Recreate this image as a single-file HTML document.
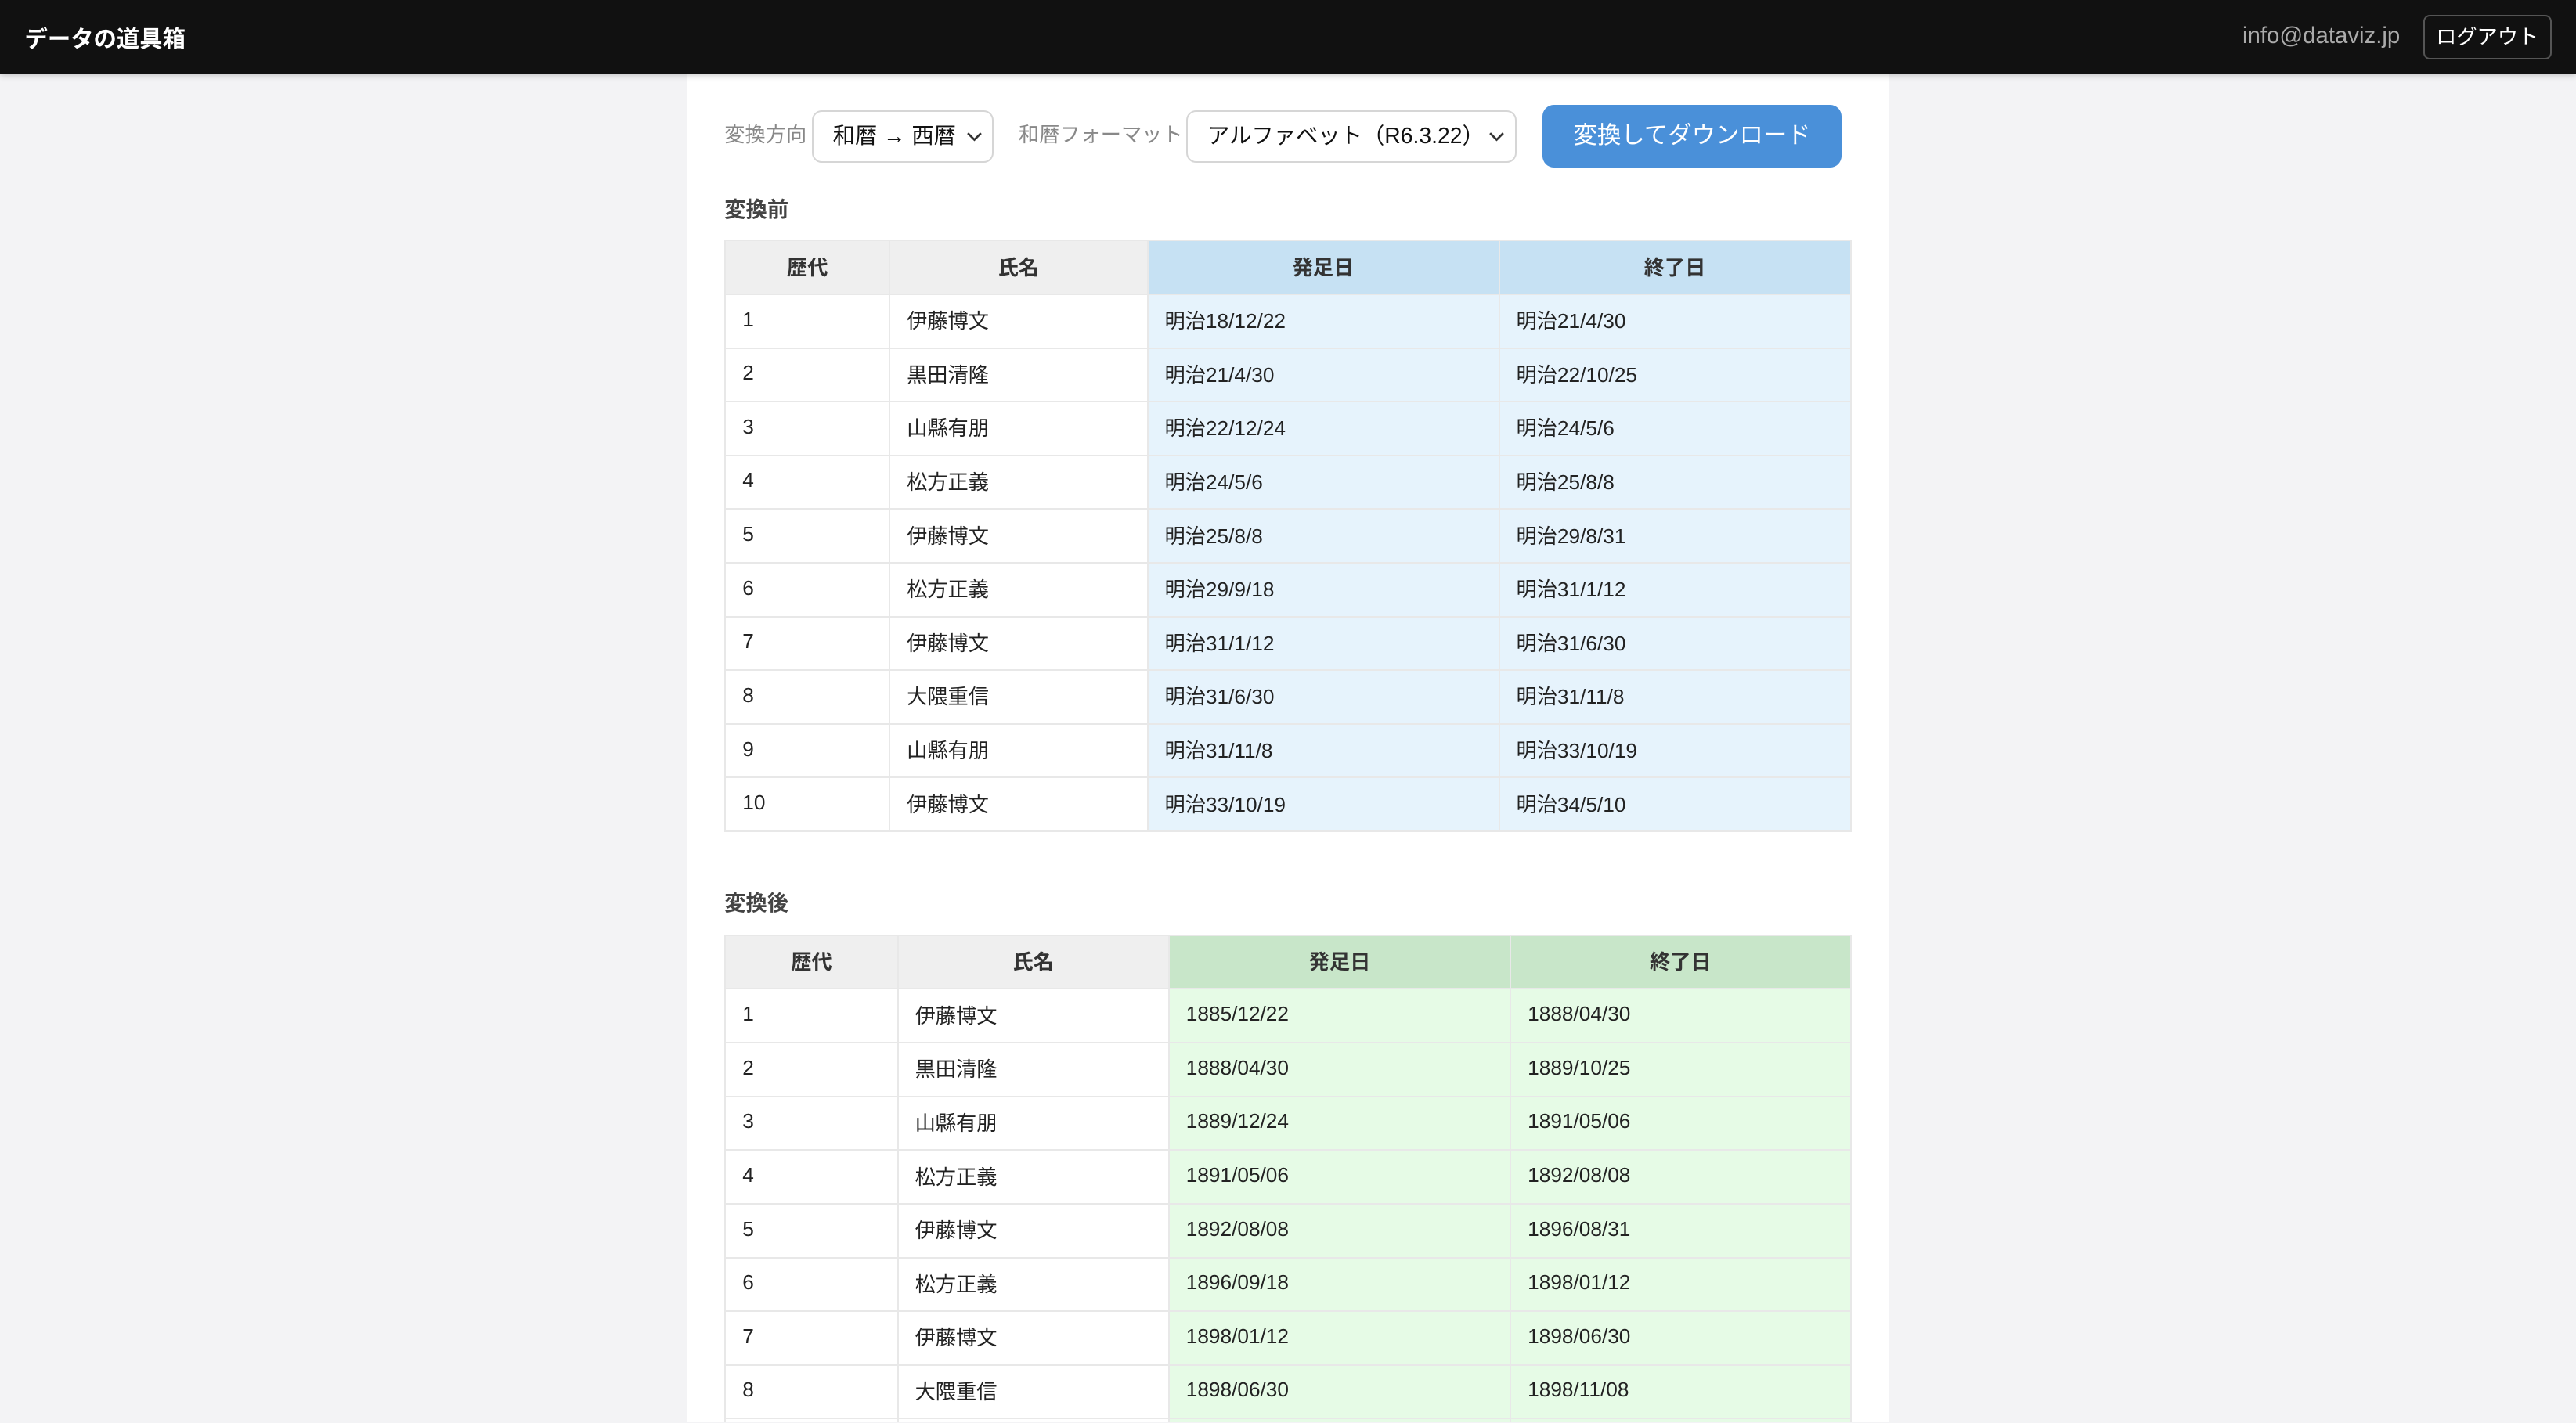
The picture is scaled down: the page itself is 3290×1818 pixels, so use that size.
<!DOCTYPE html>
<html><head><meta charset="utf-8">
<style>
*{box-sizing:border-box;margin:0;padding:0}
html,body{width:3290px;height:1818px;overflow:hidden;background:#f3f3f5}
#w{zoom:2.0982;width:1568px;height:866px;position:relative;font-family:"Liberation Sans","Noto Sans CJK JP",sans-serif;color:#222;font-size:13px;overflow:hidden}
.hd{position:absolute;left:0;top:0;width:1568px;height:45px;background:#111;box-shadow:0 1px 4px rgba(0,0,0,.25);z-index:2}
.logo{position:absolute;left:15px;top:13px;color:#fff;font-weight:bold;font-size:14px}
.mail{position:absolute;left:1365px;top:14px;color:#aaa;font-size:14px}
.out{position:absolute;left:1475px;top:9px;width:78px;height:27px;border:1px solid #555;border-radius:4px;color:#fff;font-size:12.5px;text-align:center;line-height:25px}
.card{position:absolute;left:418px;top:45px;width:732px;height:900px;background:#fff}
.lbl{position:absolute;top:72px;color:#888;font-size:12.5px}
.sel{position:absolute;top:67px;height:32px;border:1px solid #d6d6d6;border-radius:6px;background:#fff;font-size:13.5px;line-height:30px;padding-left:12px;color:#111}
.sel svg{position:absolute;right:6px;top:11px}
.btn{position:absolute;left:939px;top:64px;width:182px;height:38px;background:#4a90d9;border-radius:7px;color:#fff;font-size:14.5px;text-align:center;line-height:38px}
h3{position:absolute;left:441px;font-size:13px;font-weight:bold;color:#444}
table{position:absolute;left:441px;border-collapse:collapse;table-layout:fixed;font-size:12.5px}
td,th{height:32.7px;border:1px solid #e8e8e8;padding:0 10px 2px;text-align:left;font-weight:normal}
th{text-align:center;font-weight:bold;background:#efefef;color:#333}
.b th.d{background:#c6e1f3}.b td.d{background:#e6f3fc}
.g th.d{background:#c8e6c9}.g td.d{background:#e6fbe6}
</style></head><body><div id="w">
<div class="hd"><div class="logo">データの道具箱</div><div class="mail">info@dataviz.jp</div><div class="out">ログアウト</div></div>
<div class="card"></div>
<div class="lbl" style="left:441px">変換方向</div>
<div class="sel" style="left:494px;width:111px">和暦 → 西暦<svg width="10" height="8" viewBox="0 0 10 8"><path d="M1 2l4 4 4-4" fill="none" stroke="#333" stroke-width="1.3"/></svg></div>
<div class="lbl" style="left:620px">和暦フォーマット</div>
<div class="sel" style="left:722px;width:201px">アルファベット（R6.3.22）<svg width="10" height="8" viewBox="0 0 10 8"><path d="M1 2l4 4 4-4" fill="none" stroke="#333" stroke-width="1.3"/></svg></div>
<div class="btn">変換してダウンロード</div>
<h3 style="top:117px">変換前</h3>
<table class="b" style="top:146px;width:685px">
<colgroup><col style="width:100px"><col style="width:157px"><col style="width:214px"><col style="width:214px"></colgroup>
<tr><th>歴代</th><th>氏名</th><th class="d">発足日</th><th class="d">終了日</th></tr>
<tr><td>1</td><td>伊藤博文</td><td class="d">明治18/12/22</td><td class="d">明治21/4/30</td></tr>
<tr><td>2</td><td>黒田清隆</td><td class="d">明治21/4/30</td><td class="d">明治22/10/25</td></tr>
<tr><td>3</td><td>山縣有朋</td><td class="d">明治22/12/24</td><td class="d">明治24/5/6</td></tr>
<tr><td>4</td><td>松方正義</td><td class="d">明治24/5/6</td><td class="d">明治25/8/8</td></tr>
<tr><td>5</td><td>伊藤博文</td><td class="d">明治25/8/8</td><td class="d">明治29/8/31</td></tr>
<tr><td>6</td><td>松方正義</td><td class="d">明治29/9/18</td><td class="d">明治31/1/12</td></tr>
<tr><td>7</td><td>伊藤博文</td><td class="d">明治31/1/12</td><td class="d">明治31/6/30</td></tr>
<tr><td>8</td><td>大隈重信</td><td class="d">明治31/6/30</td><td class="d">明治31/11/8</td></tr>
<tr><td>9</td><td>山縣有朋</td><td class="d">明治31/11/8</td><td class="d">明治33/10/19</td></tr>
<tr><td>10</td><td>伊藤博文</td><td class="d">明治33/10/19</td><td class="d">明治34/5/10</td></tr>
</table>
<h3 style="top:539px">変換後</h3>
<table class="g" style="top:569px;width:685px">
<colgroup><col style="width:105px"><col style="width:165px"><col style="width:208px"><col style="width:207px"></colgroup>
<tr><th>歴代</th><th>氏名</th><th class="d">発足日</th><th class="d">終了日</th></tr>
<tr><td>1</td><td>伊藤博文</td><td class="d">1885/12/22</td><td class="d">1888/04/30</td></tr>
<tr><td>2</td><td>黒田清隆</td><td class="d">1888/04/30</td><td class="d">1889/10/25</td></tr>
<tr><td>3</td><td>山縣有朋</td><td class="d">1889/12/24</td><td class="d">1891/05/06</td></tr>
<tr><td>4</td><td>松方正義</td><td class="d">1891/05/06</td><td class="d">1892/08/08</td></tr>
<tr><td>5</td><td>伊藤博文</td><td class="d">1892/08/08</td><td class="d">1896/08/31</td></tr>
<tr><td>6</td><td>松方正義</td><td class="d">1896/09/18</td><td class="d">1898/01/12</td></tr>
<tr><td>7</td><td>伊藤博文</td><td class="d">1898/01/12</td><td class="d">1898/06/30</td></tr>
<tr><td>8</td><td>大隈重信</td><td class="d">1898/06/30</td><td class="d">1898/11/08</td></tr>
<tr><td>9</td><td>山縣有朋</td><td class="d">1898/11/08</td><td class="d">1900/10/19</td></tr>
</table>
</div></body></html>
